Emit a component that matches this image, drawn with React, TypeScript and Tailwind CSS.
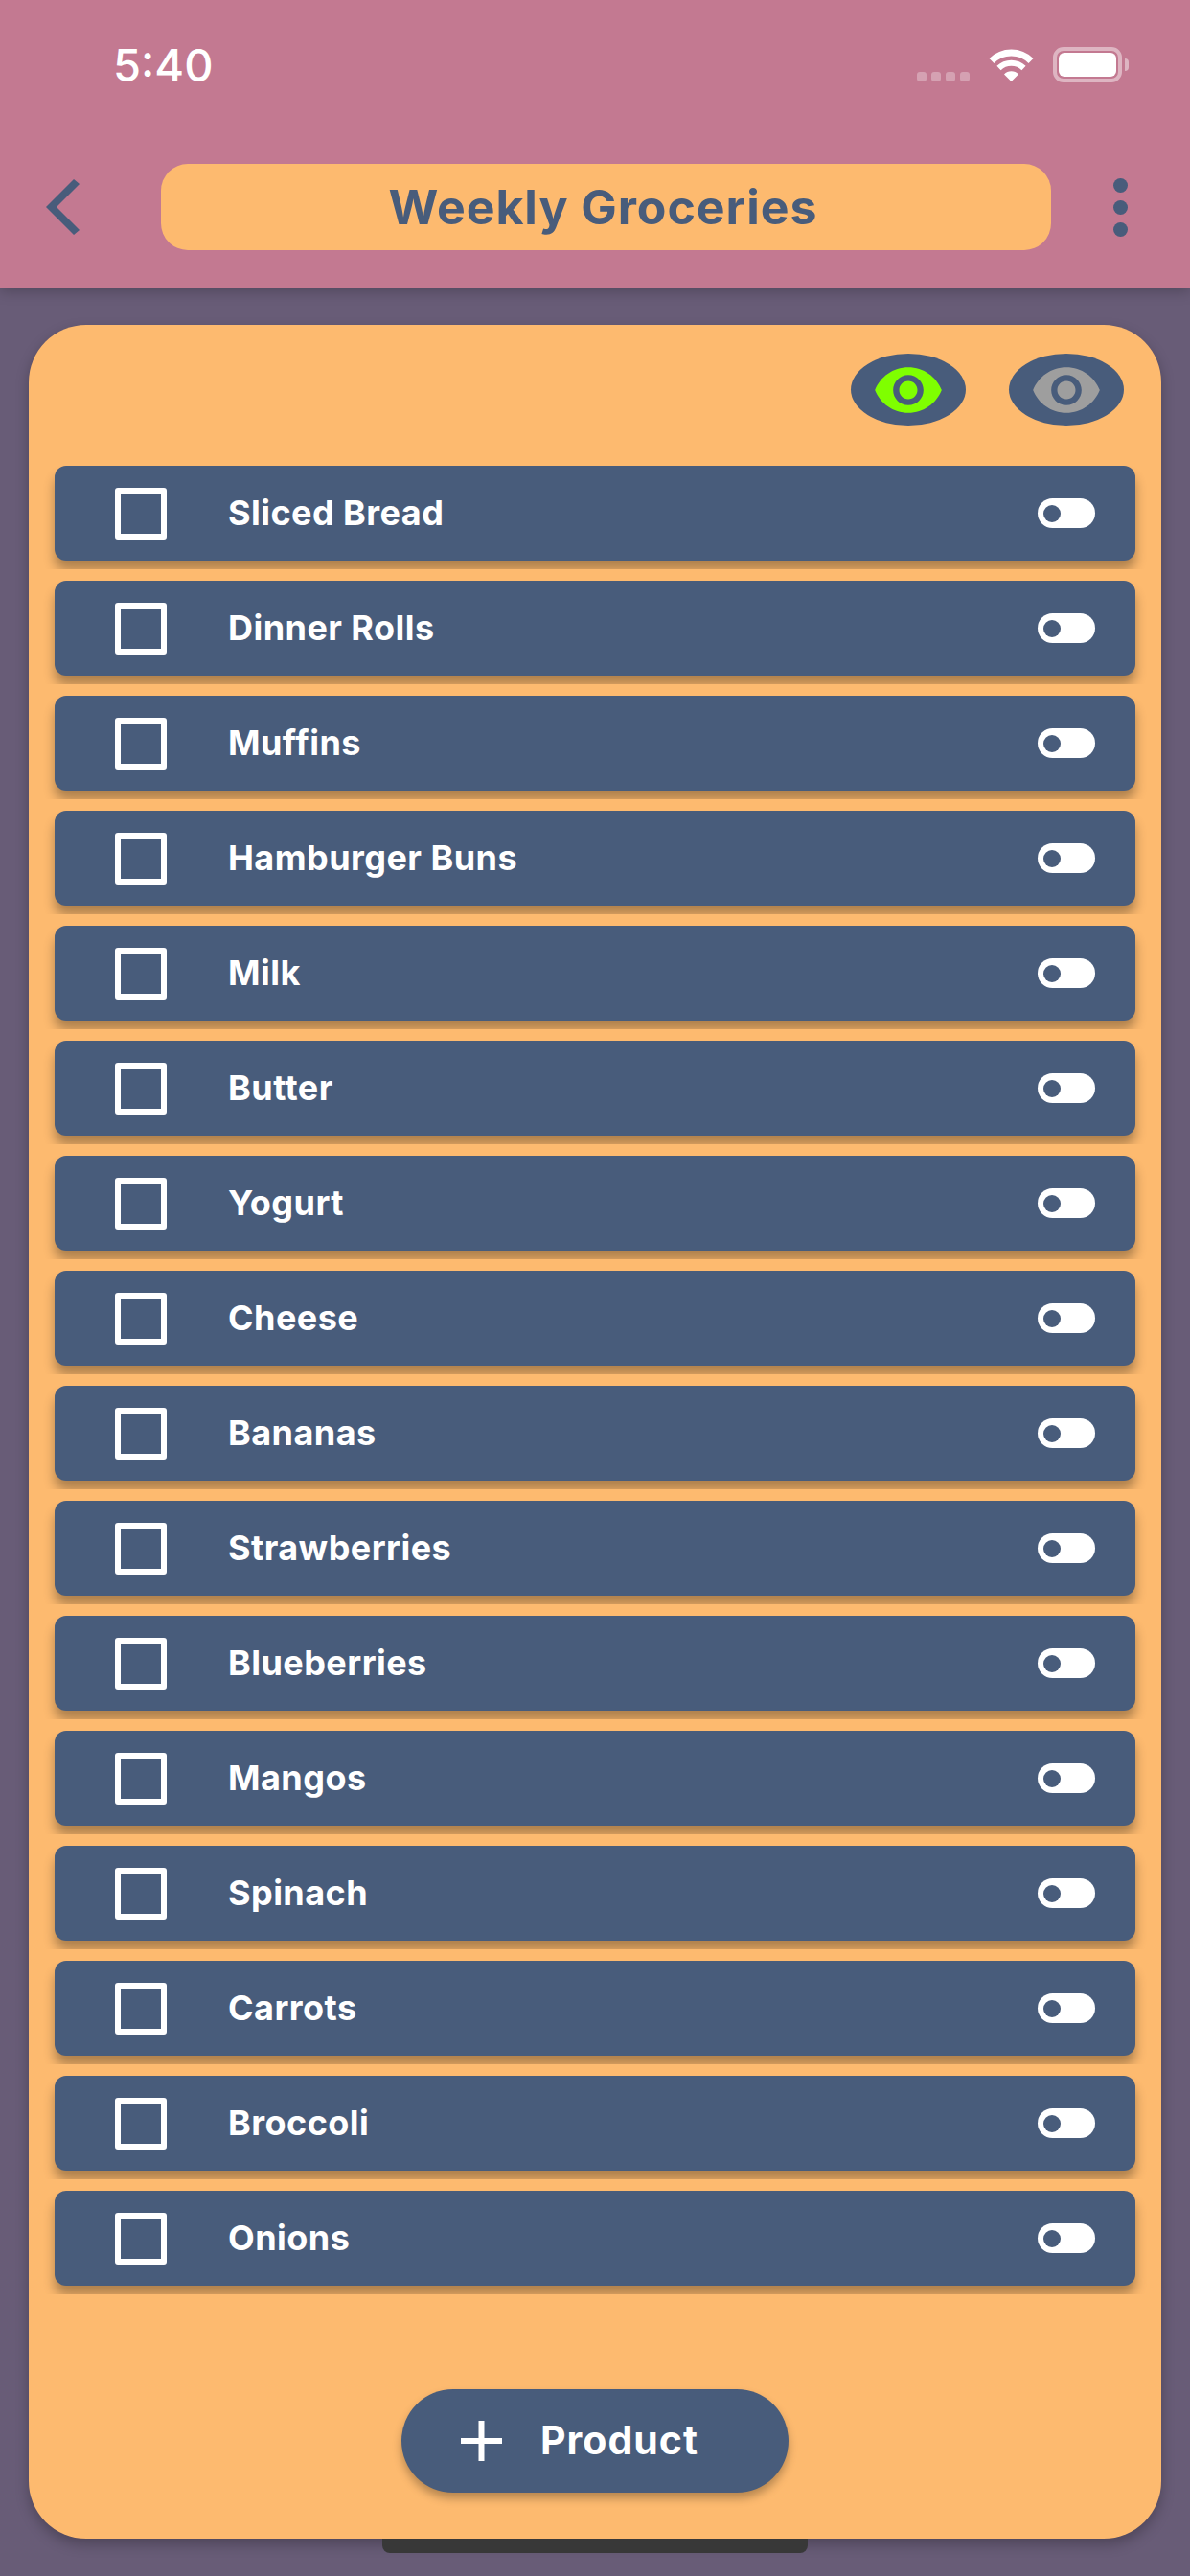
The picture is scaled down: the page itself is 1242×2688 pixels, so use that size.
import React from 'react';

const products = [
  'Sliced Bread', 'Dinner Rolls', 'Muffins', 'Hamburger Buns', 'Milk', 'Butter', 'Yogurt', 'Cheese',
  'Bananas', 'Strawberries', 'Blueberries', 'Mangos', 'Spinach', 'Carrots', 'Broccoli', 'Onions',
];

const eyePath =
  'M12 4.5C7 4.5 2.73 7.61 1 12c1.73 4.39 6 7.5 11 7.5s9.27-3.11 11-7.5c-1.73-4.39-6-7.5-11-7.5zM12 17c-2.76 0-5-2.24-5-5s2.24-5 5-5 5 2.24 5 5-2.24 5-5 5zm0-8c-1.66 0-3 1.34-3 3s1.34 3 3 3 3-1.34 3-3-1.34-3-3-3z';

function EyeButton({ className }: { className: string }) {
  return (
    <div className="w-[120px] h-[75px] rounded-[50%] bg-[#485c7b] flex items-center justify-center">
      <svg viewBox="0 0 24 24" className={`w-[76px] h-[76px] ${className}`} fill="currentColor">
        <path d={eyePath} />
      </svg>
    </div>
  );
}

function StatusBar() {
  return (
    <div className="h-[171px] pt-[39px] pl-[118px] pr-[64px] flex items-start justify-between">
      <span className="text-[47px] leading-[57px] font-medium text-white">5:40</span>
      <div className="flex items-start pt-[10px]">
        <div className="flex gap-[5px] mt-[26px] mr-[20px]">
          <div className="w-[10px] h-[10px] rounded-[3px] bg-white/30" />
          <div className="w-[10px] h-[10px] rounded-[3px] bg-white/30" />
          <div className="w-[10px] h-[10px] rounded-[3px] bg-white/30" />
          <div className="w-[10px] h-[10px] rounded-[3px] bg-white/30" />
        </div>
        <svg viewBox="0 0 47 36" className="w-[47px] h-[36px] mr-[20px]" fill="none" stroke="white">
          <path d="M3 14.5 A29 29 0 0 1 44 14.5" strokeWidth="7" />
          <path d="M10.5 22 A18.5 18.5 0 0 1 36.5 22" strokeWidth="6" />
          <path d="M23.5 36 L16 28.5 A10.5 10.5 0 0 1 31 28.5 Z" fill="white" stroke="none" />
        </svg>
        <div className="w-[72px] h-[37px] rounded-[11px] border-[4px] border-white/45 p-[2px]">
          <div className="w-full h-full rounded-[6px] bg-white" />
        </div>
        <div className="w-[4px] h-[13px] mt-[12px] ml-[3px] rounded-r-full bg-white/45" />
      </div>
    </div>
  );
}

function ProductRow({ name }: { name: string }) {
  return (
    <div className="overflow-hidden px-[12px] pb-[9px] mb-[12px]">
      <div className="h-[99px] rounded-[12px] bg-[#485c7b] shadow-[0_10px_12px_rgba(0,0,0,0.3)] flex items-center pl-[63px] pr-[42px]">
        <div className="w-[54px] h-[54px] rounded-[3px] border-[6px] border-white" />
        <span className="ml-[64px] pb-[2px] flex-1 text-[36px] font-bold tracking-[0.45px] text-white">{name}</span>
        <div className="w-[60px] h-[31px] rounded-full bg-white flex items-center pl-[6px]">
          <div className="w-[18px] h-[18px] rounded-full bg-[#485c7b]" />
        </div>
      </div>
    </div>
  );
}

export default function App() {
  return (
    <div className="relative h-[2688px] w-[1242px] overflow-hidden bg-[#685c77] font-['Inter',sans-serif]">
      <header className="relative z-10 h-[300px] bg-[#c37991] shadow-[0_3px_14px_rgba(0,0,0,0.25)]">
        <StatusBar />
        <div className="flex items-center pl-[48px] pr-[62px] h-[90px]">
          <svg viewBox="0 0 35 58" className="w-[35px] h-[58px] text-[#485c7b]" fill="currentColor">
            <polygon points="29,0 35,5 11,29 35,53 29,58 0,29" />
          </svg>
          <div className="ml-[85px] w-[929px] h-[90px] rounded-[28px] bg-[#fdba6f] flex items-center justify-center pr-[6px]">
            <span className="text-[50px] font-bold tracking-[0.95px] text-[#485c7b]">Weekly Groceries</span>
          </div>
          <div className="ml-[65px] flex flex-col gap-[8px]">
            <div className="w-[15px] h-[15px] rounded-full bg-[#485c7b]" />
            <div className="w-[15px] h-[15px] rounded-full bg-[#485c7b]" />
            <div className="w-[15px] h-[15px] rounded-full bg-[#485c7b]" />
          </div>
        </div>
      </header>

      <main className="relative mt-[39px] mx-[30px] h-[2310px] rounded-[60px] bg-[#fdba6f] shadow-[0_6px_14px_rgba(0,0,0,0.25)] px-[15px] pt-[30px]">
        <div className="flex justify-end gap-[45px] pr-[24px] h-[117px]">
          <EyeButton className="text-[#7fff00]" />
          <EyeButton className="text-[#9e9e9e]" />
        </div>
        <div>
          {products.map((name) => (
            <ProductRow key={name} name={name} />
          ))}
        </div>
        <div className="mt-[99px] flex justify-center">
          <button className="w-[404px] h-[108px] rounded-full bg-[#485c7b] shadow-[0_6px_10px_rgba(0,0,0,0.28)] flex items-center pl-[62px] text-white">
            <svg viewBox="0 0 43 42" className="w-[43px] h-[42px]" fill="currentColor">
              <rect x="18.5" y="0" width="6" height="42" />
              <rect x="0" y="18" width="43" height="6" />
            </svg>
            <span className="ml-[40px] text-[41px] font-bold tracking-[1px]">Product</span>
          </button>
        </div>
      </main>

      <div className="absolute left-[399px] top-[2649px] w-[444px] h-[15px] rounded-b-[8px] bg-[#383838]" />
    </div>
  );
}
